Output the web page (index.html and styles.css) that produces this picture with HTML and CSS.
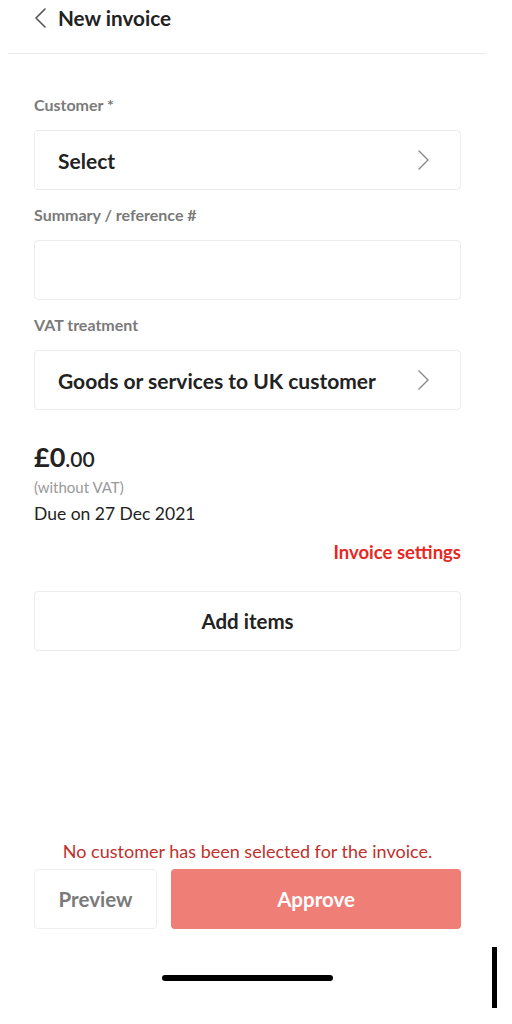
FILE: index.html
```html
<!DOCTYPE html>
<html lang="en">
<head>
<meta charset="utf-8">
<link rel="stylesheet" href="styles.css">
</head>
<body>
<div class="screen">
  <header class="topbar">
    <svg class="back" width="14" height="22" viewBox="0 0 14 22"><path d="M11 2 L2 11 L11 20" fill="none" stroke="#555" stroke-width="1.6" stroke-linecap="round" stroke-linejoin="round"/></svg>
    <h1 class="title">New invoice</h1>
  </header>
  <main class="form">
    <div class="label first">Customer *</div>
    <div class="field select">
      <span class="field-text">Select</span>
      <svg class="chev" width="14" height="22" viewBox="0 0 14 22"><path d="M3 2 L12 11 L3 20" fill="none" stroke="#888" stroke-width="1.4" stroke-linecap="round" stroke-linejoin="round"/></svg>
    </div>
    <div class="label">Summary / reference #</div>
    <div class="field"></div>
    <div class="label">VAT treatment</div>
    <div class="field select">
      <span class="field-text">Goods or services to UK customer</span>
      <svg class="chev" width="14" height="22" viewBox="0 0 14 22"><path d="M3 2 L12 11 L3 20" fill="none" stroke="#888" stroke-width="1.4" stroke-linecap="round" stroke-linejoin="round"/></svg>
    </div>
    <div class="total"><span class="total-main">£0</span><span class="total-dec">.00</span></div>
    <div class="novat">(without VAT)</div>
    <div class="due">Due on 27 Dec 2021</div>
    <div class="settings-row"><span class="settings">Invoice settings</span></div>
    <div class="field add">Add items</div>
  </main>
  <footer class="bottom">
    <div class="error">No customer has been selected for the invoice.</div>
    <div class="actions">
      <div class="btn preview">Preview</div>
      <div class="btn approve">Approve</div>
    </div>
    <div class="home-wrap"><div class="home"></div></div>
  </footer>
  <div class="edge-bar"></div>
</div>
</body>
</html>
```
FILE: styles.css
```css
* { box-sizing: border-box; }
html, body { margin: 0; padding: 0; background: #fff; }
body { font-family: Lato, "Open Sans", sans-serif; color: #222; }
.screen { position: relative; width: 512px; height: 1024px; display: flex; flex-direction: column; }
.topbar { display: flex; align-items: center; margin: 0 26px 0 8px; padding: 0 0 17px 26px; border-bottom: 1px solid #ececec; height: 54px; }
.back { margin-right: 10px; }
.title { margin: 0; font-size: 20.7px; font-weight: 700; color: #222; }
.form { padding: 0 51px 0 34px; display: flex; flex-direction: column; }
.label { font-size: 16px; font-weight: 700; color: #7a7a7a; height: 25px; line-height: 25px; margin: 12px 0 13px 0; }
.label.first { margin-top: 38px; }
.field { height: 60px; border: 1px solid #ececec; border-radius: 4px; display: flex; align-items: center; }
.select { padding: 0 30px 0 23px; justify-content: space-between; }
.field-text { font-size: 21px; font-weight: 700; color: #222; }
.total { margin-top: 32px; height: 30px; line-height: 30px; }
.total-main { font-size: 27px; font-weight: 700; color: #222; }
.total-dec { font-size: 21px; font-weight: 600; color: #222; }
.novat { font-size: 15px; color: #999; margin-top: 4px; line-height: 22px; }
.due { font-size: 17.5px; color: #222; line-height: 28px; margin-top: 2px; }
.settings-row { display: flex; justify-content: flex-end; margin-top: 11px; height: 26px; align-items: center; }
.settings { font-size: 18.5px; font-weight: 700; color: #e8281f; }
.add { margin-top: 26px; justify-content: center; font-size: 20.5px; font-weight: 700; color: #222; }
.bottom { margin-top: auto; padding: 0 51px 0 34px; }
.error { text-align: center; font-size: 18px; color: #c0302d; line-height: 22px; }
.actions { display: flex; gap: 14px; margin-top: 7px; }
.btn { height: 60px; border-radius: 4px; display: flex; align-items: center; justify-content: center; font-size: 20.5px; font-weight: 700; }
.preview { width: 123px; border: 1px solid #efefef; color: #7a7a7a; }
.approve { flex: 1; background: #ef7e76; color: #fff; }
.home-wrap { display: flex; justify-content: center; padding: 46px 0 43px; }
.home { width: 171px; height: 6px; border-radius: 3px; background: #000; }
.edge-bar { position: absolute; left: 492px; top: 947px; width: 5px; height: 61px; background: #000; }
```
